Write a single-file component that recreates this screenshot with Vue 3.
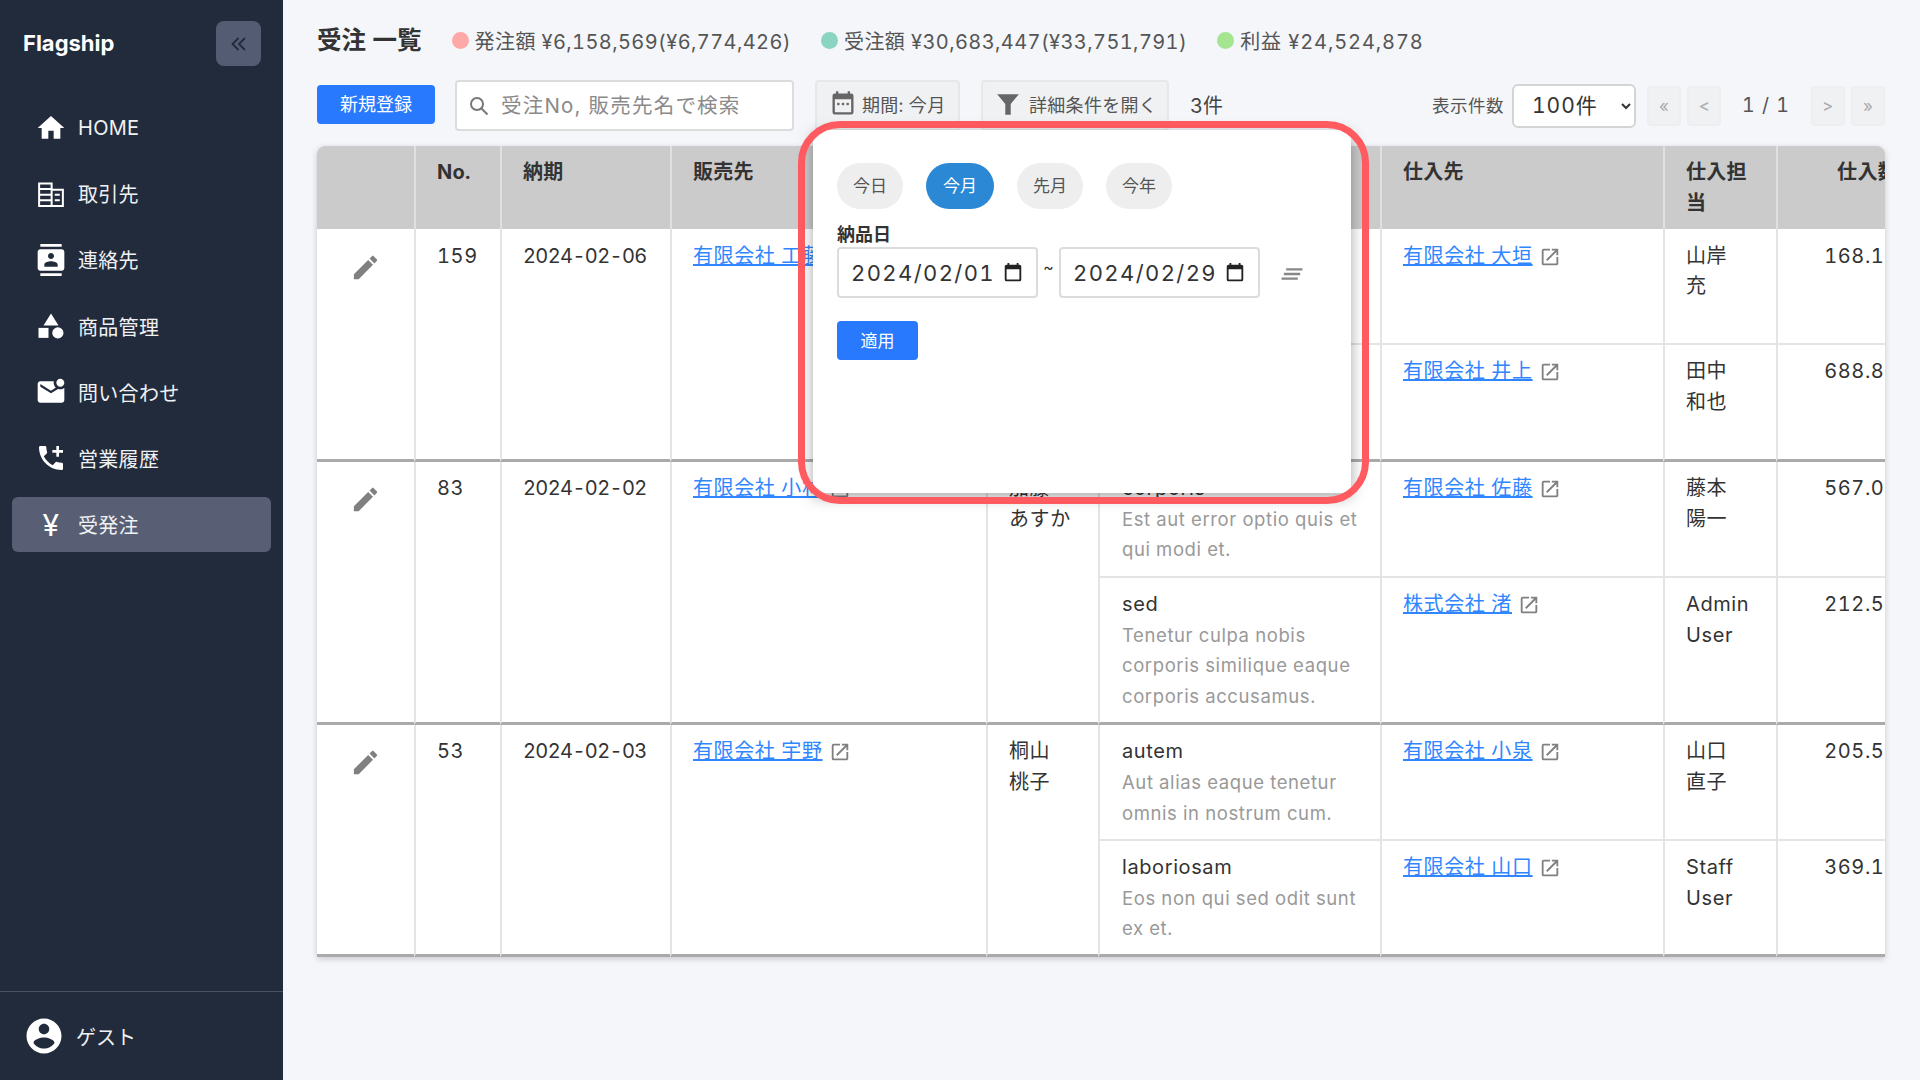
<script setup>
const nav = [
  { label: 'HOME', icon: 'home' },
  { label: '取引先', icon: 'building' },
  { label: '連絡先', icon: 'contact' },
  { label: '商品管理', icon: 'shapes' },
  { label: '問い合わせ', icon: 'mail' },
  { label: '営業履歴', icon: 'phone' },
  { label: '受発注', icon: 'yen', active: true }
]
const stats = [
  { color: '#ffa8a8', text: '発注額 ¥6,158,569(¥6,774,426)' },
  { color: '#8ad4c2', text: '受注額 ¥30,683,447(¥33,751,791)' },
  { color: '#a4e58f', text: '利益 ¥24,524,878', wide: true }
]
const orders = [
  {
    no: 159, date: '2024-02-06', customer: '有限会社 工藤', person: ['松本', '健一'],
    items: [
      { name: 'quia', desc: 'Sit dolorem nam quo voluptatibus vero.', supplier: '有限会社 大垣', staff: ['山岸', '充'], price: '168.10' },
      { name: 'nobis', desc: 'Illum et quas sed voluptatem error.', supplier: '有限会社 井上', staff: ['田中', '和也'], price: '688.80' }
    ]
  },
  {
    no: 83, date: '2024-02-02', customer: '有限会社 小林', person: ['加藤', 'あすか'],
    items: [
      { name: 'corporis', desc: 'Est aut error optio quis et qui modi et.', supplier: '有限会社 佐藤', staff: ['藤本', '陽一'], price: '567.00' },
      { name: 'sed', desc: 'Tenetur culpa nobis corporis similique eaque corporis accusamus.', supplier: '株式会社 渚', staff: ['Admin', 'User'], price: '212.50' }
    ]
  },
  {
    no: 53, date: '2024-02-03', customer: '有限会社 宇野', person: ['桐山', '桃子'],
    items: [
      { name: 'autem', desc: 'Aut alias eaque tenetur omnis in nostrum cum.', supplier: '有限会社 小泉', staff: ['山口', '直子'], price: '205.50' },
      { name: 'laboriosam', desc: 'Eos non qui sed odit sunt ex et.', supplier: '有限会社 山口', staff: ['Staff', 'User'], price: '369.10' }
    ]
  }
]
const presets = [
  { label: '今日' }, { label: '今月', on: true }, { label: '先月' }, { label: '今年' }
]
const pencil = 'M20.71,7.04C21.1,6.65 21.1,6 20.71,5.63L18.37,3.29C18,2.9 17.35,2.9 16.96,3.29L15.12,5.12L18.87,8.87M3,17.25V21H6.75L17.81,9.93L14.06,6.18L3,17.25Z'
const external = 'M19 19H5V5h7V3H5a2 2 0 0 0-2 2v14a2 2 0 0 0 2 2h14c1.1 0 2-.9 2-2v-7h-2v7zM14 3v2h3.59l-9.83 9.83 1.41 1.41L19 6.41V10h2V3h-7z'
const calendar = 'M19 3h-1V1h-2v2H8V1H6v2H5a2 2 0 0 0-2 2v14a2 2 0 0 0 2 2h14a2 2 0 0 0 2-2V5a2 2 0 0 0-2-2zm0 16H5V8h14v11z'
</script>

<template>
  <div class="app">
    <aside class="sidebar">
      <div class="brand">
        <span class="logo">Flagship</span>
        <button class="collapse">
          <svg width="22" height="22" viewBox="0 0 22 22" fill="none" stroke="#222b3c" stroke-width="1.8"><path d="M10.5 5 4.5 11l6 6M17 5l-6 6 6 6"/></svg>
        </button>
      </div>
      <nav class="nav">
        <a v-for="n in nav" :key="n.label" class="nav-item" :class="{ active: n.active }">
          <span class="nav-icon">
            <svg v-if="n.icon === 'home'" width="32" height="32" viewBox="0 0 24 24" fill="#fff"><path d="M10 20v-6h4v6h5v-8h3L12 3 2 12h3v8z"/></svg>
            <svg v-else-if="n.icon === 'building'" width="30" height="30" viewBox="0 0 24 24" fill="none" stroke="#fff" stroke-width="1.6"><path d="M2.5 3.5h10v18h-10zM12.5 8.5h9v13h-9zM2.5 8h10M2.5 12.5h10M2.5 17h10M15 12.500h4M15 17h4"/></svg>
            <svg v-else-if="n.icon === 'contact'" width="32" height="32" viewBox="0 0 24 24" fill="#fff"><path d="M20 0H4v2h16V0zM4 24h16v-2H4v2zM20 4H4c-1.1 0-2 .9-2 2v12c0 1.1.9 2 2 2h16c1.1 0 2-.9 2-2V6c0-1.1-.9-2-2-2zm-8 2.750c1.240 0 2.250 1.010 2.250 2.250s-1.010 2.250-2.250 2.250S9.750 10.240 9.750 9 10.760 6.750 12 6.750zM17 17H7v-1.500c0-1.670 3.330-2.500 5-2.500s5 .83 5 2.500V17z"/></svg>
            <svg v-else-if="n.icon === 'shapes'" width="30" height="30" viewBox="0 0 24 24" fill="#fff"><path d="M12 2 18 11.500H6z"/><rect x="2" y="13.500" width="8" height="8"/><circle cx="17.500" cy="17.500" r="4.500"/></svg>
            <svg v-else-if="n.icon === 'mail'" width="32" height="32" viewBox="0 0 24 24" fill="#fff"><path d="M22 8.980V18c0 1.100-.9 2-2 2H4c-1.100 0-2-.9-2-2V6c0-1.100.9-2 2-2h10.100c-.06.320-.1.660-.1 1 0 1.480.650 2.790 1.670 3.710L12 11 4 6v2l8 5 5.300-3.320c.540.200 1.100.320 1.700.320 1.130 0 2.160-.390 3-1.020zM16 5c0 1.660 1.340 3 3 3s3-1.340 3-3-1.340-3-3-3-3 1.340-3 3z"/></svg>
            <svg v-else-if="n.icon === 'phone'" width="32" height="32" viewBox="0 0 24 24" fill="#fff"><path d="M20 15.500c-1.250 0-2.450-.2-3.570-.57-.35-.11-.74-.03-1.020.24l-2.200 2.200c-2.830-1.440-5.150-3.750-6.590-6.590l2.200-2.210c.28-.26.36-.65.25-1C8.700 6.450 8.500 5.250 8.500 4c0-.55-.45-1-1-1H4c-.55 0-1 .45-1 1 0 9.390 7.610 17 17 17 .55 0 1-.45 1-1v-3.500c0-.55-.45-1-1-1zM21 6h-3V3h-2v3h-3v2h3v3h2V8h3z"/></svg>
            <span v-else class="yen">¥</span>
          </span>
          <span>{{ n.label }}</span>
        </a>
      </nav>
      <div class="user">
        <svg width="42" height="42" viewBox="0 0 24 24" fill="#fff"><path d="M12 2C6.480 2 2 6.480 2 12s4.480 10 10 10 10-4.480 10-10S17.520 2 12 2zm0 3c1.660 0 3 1.340 3 3s-1.340 3-3 3-3-1.340-3-3 1.340-3 3-3zm0 14.200c-2.500 0-4.710-1.280-6-3.220.03-1.990 4-3.080 6-3.080 1.990 0 5.970 1.090 6 3.080-1.290 1.940-3.500 3.220-6 3.220z"/></svg>
        <span>ゲスト</span>
      </div>
    </aside>

    <main class="main">
      <header class="head">
        <h1>受注 一覧</h1>
        <div v-for="s in stats" :key="s.text" class="stat" :class="{ wide: s.wide }">
          <i class="dot" :style="{ background: s.color }"></i>
          <span>{{ s.text }}</span>
        </div>
      </header>

      <div class="toolbar">
        <button class="primary new">新規登録</button>
        <label class="search">
          <svg width="24" height="24" viewBox="0 0 24 24" fill="none" stroke="#777" stroke-width="2"><circle cx="10" cy="10" r="6"/><path d="m14.500 14.500 6 6"/></svg>
          <input placeholder="受注No, 販売先名で検索" />
        </label>
        <button class="tool period">
          <svg width="28" height="28" viewBox="0 0 24 24" fill="#666"><path :d="calendar"/><rect x="7" y="11" width="2" height="2"/><rect x="11" y="11" width="2" height="2"/><rect x="15" y="11" width="2" height="2"/></svg>
          期間: 今月
        </button>
        <button class="tool detail">
          <svg width="26" height="26" viewBox="0 0 24 24" fill="#666"><path d="M2 3h20l-7.500 9v10h-5V12z"/></svg>
          詳細条件を開く
        </button>
        <span class="count">3件</span>
        <div class="pager">
          <span class="size-label">表示件数</span>
          <select class="size"><option>100件</option></select>
          <button class="page">«</button>
          <button class="page">&lt;</button>
          <span class="pos">1 / 1</span>
          <button class="page">&gt;</button>
          <button class="page">»</button>
        </div>
      </div>

      <div class="table-wrap">
        <table>
          <colgroup>
            <col style="width:97px"/><col style="width:86px"/><col style="width:170px"/><col style="width:316px"/><col style="width:112px"/><col style="width:282px"/><col style="width:283px"/><col style="width:113px"/><col style="width:144px"/>
          </colgroup>
          <thead>
            <tr>
              <th></th><th>No.</th><th>納期</th><th>販売先</th><th>販売担当</th><th>商品</th><th>仕入先</th><th>仕入担当</th><th class="num">仕入数</th>
            </tr>
          </thead>
          <tbody v-for="o in orders" :key="o.no">
            <tr v-for="(it, i) in o.items" :key="it.name" :class="{ last: i === 1 }">
              <template v-if="i === 0">
                <td rowspan="2" class="edit group">
                  <svg width="31" height="31" viewBox="0 0 24 24" fill="#808080"><path :d="pencil"/></svg>
                </td>
                <td rowspan="2" class="group">{{ o.no }}</td>
                <td rowspan="2" class="group day">{{ o.date }}</td>
                <td rowspan="2" class="group">
                  <a class="link">{{ o.customer }}</a>
                  <svg class="ext" width="22" height="22" viewBox="0 0 24 24" fill="#808080"><path :d="external"/></svg>
                </td>
                <td rowspan="2" class="group">{{ o.person[0] }}<br/>{{ o.person[1] }}</td>
              </template>
              <td class="product">
                <div>{{ it.name }}</div>
                <div class="desc">{{ it.desc }}</div>
              </td>
              <td>
                <a class="link">{{ it.supplier }}</a>
                <svg class="ext" width="22" height="22" viewBox="0 0 24 24" fill="#808080"><path :d="external"/></svg>
              </td>
              <td>{{ it.staff[0] }}<br/>{{ it.staff[1] }}</td>
              <td class="num">{{ it.price }}</td>
            </tr>
          </tbody>
        </table>
      </div>

      <div class="popover">
        <div class="presets">
          <button v-for="p in presets" :key="p.label" class="pill" :class="{ on: p.on }">{{ p.label }}</button>
        </div>
        <div class="field-label">納品日</div>
        <div class="range">
          <div class="date">
            <span>2024/02/01</span>
            <svg width="22" height="22" viewBox="0 0 24 24" fill="#222"><path :d="calendar"/></svg>
          </div>
          <span class="tilde">~</span>
          <div class="date">
            <span>2024/02/29</span>
            <svg width="22" height="22" viewBox="0 0 24 24" fill="#222"><path :d="calendar"/></svg>
          </div>
          <svg class="clear" width="28" height="28" viewBox="0 0 24 24" fill="#888"><path d="M5 13h14v-2H5v2zm-2 4h14v-2H3v2zM7 7v2h14V7H7z"/></svg>
        </div>
        <button class="primary apply">適用</button>
      </div>
      <div class="highlight"></div>
    </main>
  </div>
</template>

<style>
html, body { margin: 0; background: #f4f6f9; }
</style>

<style scoped>
.app {
  display: flex;
  width: 1920px;
  height: 1080px;
  overflow: hidden;
  font-family: Inter, "Noto Sans CJK JP", sans-serif;
  font-variant-numeric: tabular-nums;
  color: #333;
  background: #f4f6f9;
}
button { font-family: inherit; font-variant-numeric: inherit; cursor: pointer; }

.sidebar {
  width: 283px;
  flex: none;
  display: flex;
  flex-direction: column;
  background: #222b3c;
  color: #fff;
  box-sizing: border-box;
}
.brand {
  display: flex;
  align-items: center;
  justify-content: space-between;
  padding: 21px 22px 0 23px;
  height: 45px;
  box-sizing: content-box;
}
.logo { font-size: 22px; font-weight: 700; margin-bottom: 2px; }
.collapse {
  width: 45px;
  height: 45px;
  background: #545c74;
  border: 0;
  border-radius: 8px;
  display: grid;
  place-items: center;
  padding: 0;
}
.nav {
  display: flex;
  flex-direction: column;
  gap: 11.200px;
  padding: 34px 12px 0;
  flex: 1;
}
.nav-item {
  display: flex;
  align-items: center;
  gap: 11px;
  height: 55px;
  padding-left: 23px;
  border-radius: 6px;
  font-size: 20px;
  letter-spacing: .3px;
  color: #f0f1f3;
}
.nav-item.active { background: #585f75; }
.nav-icon { width: 32px; height: 32px; display: grid; place-items: center; }
.yen { font-size: 30px; font-weight: 400; line-height: 32px; color: #fff; }
.user {
  display: flex;
  align-items: center;
  gap: 11px;
  height: 88px;
  padding-left: 23px;
  border-top: 1px solid #4a5268;
  font-size: 20px;
  color: #f0f1f3;
}

.main {
  position: relative;
  flex: 1;
  min-width: 0;
  padding: 0 35px 0 34px;
}
.head {
  display: flex;
  align-items: center;
  height: 80px;
  padding-bottom: 4px;
  box-sizing: border-box;
}
.head h1 {
  margin: 0 30px 0 0;
  font-size: 24.500px;
  font-weight: 700;
  color: #333;
}
.stat {
  display: flex;
  align-items: center;
  gap: 6px;
  margin: 5px 30px 0 0;
  font-size: 20px;
  letter-spacing: .4px;
  color: #555;
}
.stat.wide { letter-spacing: .9px; }
.dot { width: 17px; height: 17px; border-radius: 50%; }

.toolbar {
  display: flex;
  align-items: center;
  height: 51px;
}
.primary {
  background: #2979ff;
  color: #fff;
  border: 0;
  border-radius: 4px;
  font-size: 18px;
  padding: 0 0 3px;
}
.new { width: 118px; height: 39px; margin: 0 20px 2px 0; }
.search {
  display: flex;
  align-items: center;
  gap: 8px;
  width: 339px;
  height: 51px;
  box-sizing: border-box;
  padding-left: 10px;
  background: #fff;
  border: 2px solid #dcdcdc;
  border-radius: 4px;
  margin-right: 21px;
}
.search input {
  flex: 1;
  min-width: 0;
  border: 0;
  outline: 0;
  background: transparent;
  font: 20.500px Inter, "Noto Sans CJK JP", sans-serif;
  letter-spacing: 1.200px;
}
.search input::placeholder { color: #8a8a8a; }
.tool {
  display: flex;
  align-items: center;
  height: 51px;
  box-sizing: border-box;
  background: #f0f1f3;
  border: 2px solid #e6e7e9;
  border-radius: 4px;
  color: #555;
  font-size: 18px;
  letter-spacing: .3px;
  gap: 5px;
  padding: 0 0 3px 12px;
}
.period { width: 145px; margin-right: 21px; }
.detail { width: 188px; margin-right: 21px; gap: 8px; }
.count { font-size: 20px; color: #444; padding-bottom: 2px; }
.pager {
  margin-left: auto;
  display: flex;
  align-items: center;
}
.size-label { font-size: 17.500px; letter-spacing: .5px; color: #555; margin: 0 8px 3px 0; }
.size {
  width: 124px;
  height: 44px;
  padding-left: 14px;
  font: 21px Inter, "Noto Sans CJK JP", sans-serif;
  font-variant-numeric: tabular-nums;
  letter-spacing: 1px;
  color: #333;
  background: #fff;
  border: 2px solid #d4d4d4;
  border-radius: 6px;
  margin-right: 11px;
}
.page {
  width: 34px;
  height: 40px;
  background: #f0f1f3;
  border: 2px solid #eceef0;
  border-radius: 4px;
  color: #aaa;
  font-size: 17px;
  padding: 0;
  margin-right: 6px;
}
.page:last-child { margin-right: 0; }
.pos { width: 78px; text-align: center; font-size: 19.500px; letter-spacing: 1px; color: #555; margin: 0 6px 2px 0; }

.table-wrap {
  margin-top: 15px;
  background: #fff;
  border-radius: 8px 8px 0 0;
  overflow: hidden;
  box-shadow: 0 2px 6px rgba(0,0,0,.18);
}
table {
  border-collapse: separate;
  border-spacing: 0;
  table-layout: fixed;
  width: 1603px;
  font-size: 20px;
  letter-spacing: .6px;
  line-height: 30.600px;
  color: #333;
}
th {
  background: #cbcbcb;
  text-align: left;
  vertical-align: top;
  font-weight: 700;
  letter-spacing: .3px;
  padding: 11px 22px 11px 21px;
  border-left: 2px solid #e0e0e0;
  color: #333;
}
th:first-child, td.edit { border-left: 0; }
td {
  vertical-align: top;
  padding: 11.500px 22px 10.500px 21px;
  border-left: 2px solid #e4e4e4;
  border-bottom: 2px solid #e4e4e4;
}
tbody tr.last td, td.group { border-bottom: 3px solid #aaa; }
td.product { padding-left: 22px; }
td.day { letter-spacing: -.6px; white-space: nowrap; }
.num { text-align: right; }
.edit { text-align: center; }
.edit svg { display: block; margin: 11px auto 0; }
.desc { font-size: 18.500px; color: #999; }
.link { color: #2f86ff; text-decoration: underline; }
.ext { vertical-align: -5px; margin-left: 6px; }

.popover {
  position: absolute;
  left: 530px;
  top: 130px;
  width: 538px;
  height: 363px;
  box-sizing: border-box;
  background: #fff;
  padding: 33px 24px;
  box-shadow: 0 4px 14px rgba(0,0,0,.35);
}
.presets { display: flex; gap: 23px; }
.pill {
  width: 66px;
  height: 46px;
  border: 0;
  border-radius: 23px;
  background: #eee;
  color: #555;
  font-size: 17px;
  padding: 0 0 3px;
}
.pill.on { background: #2a88d4; color: #fff; width: 68px; }
.field-label {
  margin-top: 14px;
  font-size: 18px;
  line-height: 24px;
  font-weight: 700;
  color: #333;
}
.range { display: flex; align-items: center; }
.date {
  width: 201px;
  height: 51px;
  box-sizing: border-box;
  display: flex;
  align-items: center;
  justify-content: space-between;
  padding: 0 12px 0 12px;
  background: #fff;
  border: 2px solid #dcdcdc;
  border-radius: 4px;
  font-size: 22px;
  letter-spacing: 1.400px;
  color: #333;
}
.tilde { width: 21px; text-align: center; font-size: 16px; margin-bottom: 12px; }
.clear { margin: 2px 0 0 18px; }
.apply { display: block; width: 81px; height: 39px; margin-top: 23px; font-size: 17px; }

.highlight {
  position: absolute;
  left: 515px;
  top: 121px;
  width: 571px;
  height: 383px;
  box-sizing: border-box;
  border: 7px solid #ff5a5f;
  border-radius: 42px;
  pointer-events: none;
}
</style>
